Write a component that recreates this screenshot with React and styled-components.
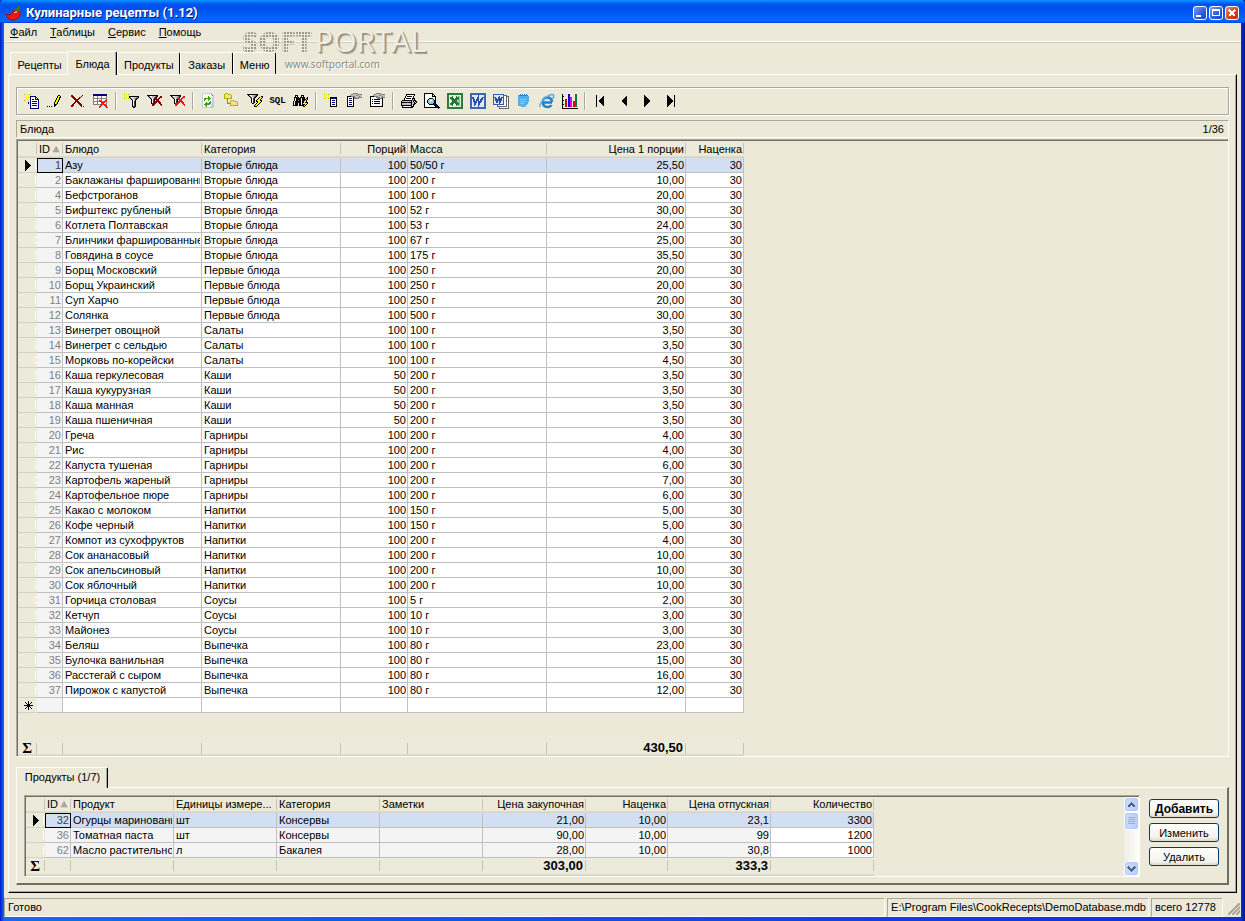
/*
 Main window of the recipe database: menu, tabs, toolbar, dish grid and the
 grid with the products of the selected dish.
*/
import React from 'react';
import styled, { createGlobalStyle, css } from 'styled-components';

const face = '#ece9d8';
const shade = '#aca899';
const dark = '#716f64';
const line = '#c0c0c0';

const GlobalStyle = createGlobalStyle`
  * {
    box-sizing: border-box;
  }
  body {
    margin: 0;
    background: ${face};
    color: #000;
    font: 11px/14px 'Liberation Sans', Arial, sans-serif;
  }
  button {
    margin: 0;
    padding: 0;
    border: 0;
    background: none;
    color: inherit;
    font: inherit;
  }
`;

const Window = styled.div`
  min-height: 100vh;
  display: flex;
  flex-direction: column;
  border: solid #0831d9;
  border-width: 0 4px 4px;
  border-image: linear-gradient(90deg, #0019cf, #166aee 4px, #0831d9 calc(100% - 4px), #00138c) 4;
  background: ${face};
`;

const TitleBar = styled.header`
  display: flex;
  align-items: center;
  height: 23px;
  margin: 0 -4px;
  padding: 3px 6px 0 5px;
  background: linear-gradient(#0997ff, #0053ee 18%, #0050ee 40%, #06f 80%, #0066ff 92%, #003dd7);
  border-radius: 4px 4px 0 0;
`;

const Title = styled.h1`
  flex: 1;
  margin: 0 0 0 4px;
  color: #fff;
  font: bold 13px/16px Roboto, 'Noto Sans', sans-serif;
  text-shadow: 1px 1px #0f1089;
`;

const CaptionButton = styled.button`
  width: 14px;
  height: 14px;
  margin-left: 2px;
  border: 1px solid #fff;
  border-radius: 3px;
  background: ${p => (p.$close ? 'linear-gradient(135deg, #e9896b, #da3f16 60%, #b92c06)' : 'linear-gradient(135deg, #7ba0f0, #2a5be0 60%, #1941c4)')};

  svg {
    display: block;
  }
`;

const MenuBar = styled.nav`
  display: flex;
  gap: 13px;
  height: 20px;
  padding: 0 6px 2px;
  border-bottom: 1px solid #d0cdbf;
  box-shadow: inset 0 -1px #fff;
`;

const MenuItem = styled.button`
  font-size: 11px;
`;

const Body = styled.main`
  flex: 1;
  display: flex;
  flex-direction: column;
  padding: 8px 4px 5px;
`;

const Brand = styled.div`
  position: absolute;
  left: 242px;
  top: 23px;
  pointer-events: none;
`;

const BrandName = styled.div`
  display: flex;
  gap: 3px;
  color: #f0eee4;
  font: 500 30px/36px 'Open Sans', 'Noto Sans', sans-serif;
  text-shadow: 1px 1px 1px #8d8a80, 2px 2px 1px #a5a294;
`;

const BrandDots = styled.span`
  font-size: 28px;
  font-weight: 800;
  color: transparent;
  text-shadow: none;
  background: linear-gradient(90deg, transparent 2px, ${face} 2px) 0 0 / 3px 3px,
    linear-gradient(transparent 2px, ${face} 2px) 0 0 / 3px 3px, #9a978b;
  background-clip: text;
`;

const BrandSite = styled.div`
  margin-left: 43px;
  color: #8f8c82;
  font: 10px/10px 'Noto Sans', sans-serif;
  text-shadow: 1px 1px #fff;
`;

const TabStrip = styled.div`
  display: flex;
  align-items: flex-end;
  height: ${p => (p.$small ? '20px' : '23px')};
  padding-left: ${p => (p.$small ? '0' : '2px')};
`;

const Tab = styled.button`
  height: 22px;
  padding: 2px 5px 0 6px;
  border: solid #fff;
  border-width: 1px 0 0 1px;
  border-right: ${p => (p.$first ? '0' : '1px solid #000')};
  border-radius: 2px 2px 0 0;
  text-align: center;
  min-width: ${p => p.$min || 0}px;
  ${p =>
    p.$active &&
    css`
      height: ${p.$small ? '21px' : '24px'};
      margin-bottom: -1px;
      padding-top: ${p.$small ? '0' : '2px'};
      padding-bottom: ${p.$small ? '2px' : '1px'};
      background: ${face};
      position: relative;
      box-shadow: inset -1px 0 ${shade};
    `};
`;

const Page = styled.section`
  flex: 1;
  display: flex;
  flex-direction: column;
  padding: 12px 7px 7px;
  border: 1px solid;
  border-color: #fff #000 #000 #fff;
  box-shadow: inset -1px -1px ${shade};
`;

const Toolbar = styled.div`
  display: flex;
  flex-wrap: wrap;
  align-items: center;
  min-height: 28px;
  padding: 2px 3px;
  border: 1px solid ${shade};
  box-shadow: 1px 1px #fff, inset 1px 1px #fff;
`;

const ToolButton = styled.button`
  display: grid;
  place-items: center;
  width: 23px;
  height: 22px;
  font: bold 9px/16px 'Liberation Mono', monospace;

  svg {
    display: block;
  }
`;

const Separator = styled.span`
  width: 2px;
  height: 18px;
  margin: 0 3px;
  border-left: 1px solid ${shade};
  border-right: 1px solid #fff;
`;

const Caption = styled.div`
  display: flex;
  justify-content: space-between;
  margin: 5px 0 1px;
  padding: 1px 4px 1px 3px;
  height: 18px;
  border: 1px solid;
  border-color: ${shade} #fff #fff ${shade};
`;

const Frame = styled.div`
  flex: 1;
  display: flex;
  min-width: 0;
  padding: 1px 0 0 1px;
  border: 1px solid;
  border-color: ${shade} #fff #fff ${shade};
  box-shadow: inset 1px 1px ${dark};
`;

const FrameContent = styled.div`
  flex: 1;
  display: flex;
  flex-direction: column;
  justify-content: space-between;
  min-width: 0;
  overflow: hidden;
`;

const Table = styled.table`
  width: ${p => p.$width}px;
  table-layout: fixed;
  border-collapse: separate;
  border-spacing: 0;
`;

const edge = css`
  background: linear-gradient(#c7c5b2, #c7c5b2) right 2px / 1px 11px no-repeat,
    linear-gradient(#e2decd, #d6d2c2) bottom / 100% 2px no-repeat, #ebeadb;
`;

const Head = styled.th`
  height: ${p => p.$height || 17}px;
  padding: 0 2px 2px;
  overflow: hidden;
  font-weight: normal;
  text-align: ${p => (p.$right ? 'right' : 'left')};
  text-overflow: ellipsis;
  white-space: nowrap;
  ${edge};

  svg {
    display: inline-block;
    margin-left: 2px;
  }
`;

const Cell = styled.td`
  height: 15px;
  padding: 0 1px 0 2px;
  border: solid ${line};
  border-width: 0 1px 1px 0;
  background: ${p => (p.$selected ? '#d2dff2' : p.$locked ? '#f4f4f4' : '#fff')};
  color: ${p => (p.$id ? '#808080' : '#000')};
  text-align: ${p => (p.$right ? 'right' : 'left')};
  ${p =>
    p.$id &&
    p.$selected &&
    css`
      color: #404040;
      outline: 1px solid #000;
      outline-offset: -1px;
    `};
`;

const CellText = styled.div`
  overflow: hidden;
  white-space: nowrap;
`;

const Marker = styled.td`
  height: 15px;
  padding: 0 0 0 1px;
  background: linear-gradient(#fff, #fff) right 1px top 3px / 1px 8px no-repeat,
    linear-gradient(#d6d2c2, #d6d2c2) bottom / 100% 1px no-repeat, #ebeadb;

  svg {
    display: block;
    margin: auto;
  }
`;

const Total = styled.td`
  height: ${p => p.$height || 15}px;
  padding: 0 3px 2px 2px;
  font: bold 13px/12px 'Liberation Sans', Arial, sans-serif;
  text-align: right;
  ${edge};
`;

const Sigma = styled(Total)`
  padding: 0 5px 2px 0;
  font: bold 15px/12px 'Liberation Serif', serif;
`;

const Details = styled.section`
  margin-top: 10px;
`;

const DetailsPage = styled.div`
  display: flex;
  gap: 9px;
  padding: 7px 8px 6px 7px;
  border: solid;
  border-width: 1px 2px 2px 1px;
  border-color: #fff ${dark} ${dark} #fff;
`;

const Actions = styled.div`
  display: flex;
  flex-direction: column;
  gap: 5px;
  width: 70px;
  padding-top: 4px;
`;

const Action = styled.button`
  height: 19px;
  border: 1px solid #003c74;
  border-radius: 3px;
  background: linear-gradient(#fff, #f3f2ec 80%, #dcd8cc);
  ${p => p.$primary && 'font-weight: bold; font-size: 12px;'};
`;

const ScrollBar = styled.div`
  display: flex;
  flex-direction: column;
  width: 15px;
  background: linear-gradient(90deg, #eeede5, #fefefb);
`;

const ScrollPart = styled.button`
  display: grid;
  place-items: center;
  height: ${p => p.$height}px;
  margin-top: ${p => (p.$last ? 'auto' : '0')};
  border: 1px solid #fff;
  border-radius: 3px;
  box-shadow: inset 0 0 0 1px #b4c8f6;
  background: linear-gradient(90deg, #cddcfe, #b9cdfb);
`;

const StatusBar = styled.footer`
  display: flex;
  gap: 2px;
  height: 19px;
`;

const StatusPanel = styled.div`
  flex: ${p => (p.$grow ? '1' : 'none')};
  min-width: ${p => p.$min || 0}px;
  padding: 1px 2px 0 3px;
  border: 1px solid;
  border-color: ${shade} #fff #fff ${shade};
  white-space: nowrap;
`;

const Grip = styled.div`
  width: 16px;
  padding: 5px 0 0 3px;
`;

const Svg = ({ size = 16, w, h, children }) => (
  <svg width={w || size} height={h || size} viewBox={`0 0 ${w || size} ${h || size}`} fill="none" shapeRendering="crispEdges" aria-hidden="true">
    {children}
  </svg>
);

const palette = {
  k: '#000', w: '#fff', y: '#ffff00', o: '#b8b000', b: '#000080', g: '#808080', d: '#404040',
  r: '#ff1010', m: '#800000', s: '#c0c0c0', f: '#f6e08c', l: '#b9cfe8', n: '#3fa020', t: '#7fd0d8',
};

// every character is one pixel, runs of the same character become one rect
const Sprite = ({ rows }) => (
  <Svg>
    {rows.map((row, y) =>
      [...row.matchAll(/([a-z])\1*/g)].map(run => (
        <rect key={`${y}-${run.index}`} x={run.index} y={y} width={run[0].length} height="1" fill={palette[run[1]]} />
      )),
    )}
  </Svg>
);

const sprites = {
  add: [
    '...y............', 'o..y..o.........', '.y.y.y..........', '..ywy.bbbbbb....',
    'yyywyybwwwwbb...', '..ywy.bwwwwbwb..', '.y.y.ybwbbwbbbb.', 'o..y..bwwwwwwwb.',
    '...y..bwbbbbbwb.', '....b.bwwwwwwwb.', '....b.bwbbbbbwb.', '......bwwwwwwwb.',
    '......bwbbbbbwb.', '......bwwwwwwwb.', '......bwwwwwwwb.', '......bbbbbbbbb.',
  ],
  edit: [
    '................', '................', '...........kk...', '..........kyyk..',
    '..........kykk..', '.........kyyk...', '.........kyok...', '........kyyk....',
    '........kyok....', '.......kyyk.....', '.......kyok.....', '.......kkk......',
    '.......kk.......', 'k.k.k..k........', '................', '................',
  ],
  remove: [
    '................', '................', '.mm.........m...', '.mmm.......m....',
    '..mmm....mm.....', '...mmm..mm......', '....mmmmm.......', '.....mmm........',
    '.....mmmm.......', '....mm.mmm......', '...mm...mmm.....', '..mm.....mmm....',
    '.mmm......mm....', '.mm........m.m..', '................', '................',
  ],
  table: [
    '................', 'bbbbbbbbbbbbbb..', 'bbbbbbbbbbbbbb..', 'gwwwgwwwgwwwwg..',
    'gwwwgwwwgwwwwg..', 'gggggggggggggg..', 'gwwwgwwwgwwwwr..', 'gwwwgwrrgwwwrr..',
    'gggggggrrggrrg..', 'gwwwgwwwrrrrwg..', 'gwwwgwwwgrrwwg..', 'ggggggggrrrrgg..',
    '.......rr..rrr..', '......rr....rr..', '......r......rr.', '................',
  ],
  filter: [
    '..y.............', 'o.y.o...........', '.yyy............', 'yywyykkkkkkkkkk.',
    '.yyy.kgwwsssggk.', 'o.y.o.kgwssgdk..', '..y....kgwsdk...', '........kwsk....',
    '........kwdk....', '........kwdk....', '........kwdk....', '........kwdk....',
    '........kwdk....', '........kddk....', '.........kk.....', '................',
  ],
  filterOff: [
    '................', '................', 'kkkkkkkkkkk.....', '.kgwwsssgdk..mm.',
    '..kgwssgmk..mmm.', '...kgwsmmm.mm...', '....kwdkmmmm....', '....kwdk.mmm....',
    '....kwdkmmmmm...', '....kwdmmm.mmm..', '....kdmmm...mm..', '.....mmm.....mm.',
    '.....mm.......m.', '................', '................', '................',
  ],
  filterFast: [
    '................', 'kkkkkkkkkkk.....', '.kgwwsssgdk.....', '..kgwssgdk....kk',
    '...kgwsdk...kyyk', '....kwdk...kyyk.', '....kwdk..kyyk..', '....kwdk.kyyykk.',
    '....kwdk.kkyyyk.', '....kwdk..kyyk..', '.....kk..kyyk...', '........kyyk....',
    '.......kyyk.....', '.......kkk......', '................', '................',
  ],
  refresh: [
    '.llllllllll.....', '.lwwwwwwwwgl....', '.lwwwwwwwwwgl...', '.lwwwwwnwwwwl...',
    '.lwwwwwnnwwll...', '.lwnnnnnnnwll...', '.lwnnwwnnwwll...', '.lwnwwwnwwwll...',
    '.lwwwwwwwnwll...', '.lwwwnwwnnwll...', '.lwwnnnnnnwll...', '.lwnnnnnnwlll...',
    '.lwwnnwwwwlll...', '.lwwwnwwwllll...', '.llllllllllll...', '................',
  ],
  tree: [
    '.ooo............', 'offfooo.........', 'offffffo........', 'offffffo........',
    'offffffo........', 'oooooooo........', '...g............', '...g...ooo......',
    '...g..offfooo...', '...g..offffffo..', '...gggoffffffo..', '......offffffo..',
    '......oooooooo..', '................', '................', '................',
  ],
  find: [
    '................', '................', '..kkk...kkk.....', '..kwk...kwk.....',
    '.kkkkk.kkkkk..k.', '.kwkkkkkwkkk.kk.', '.kwkkkkkwkkkkyk.', '.kwkkgkkwkkkyk..',
    'kwkkkkkkwkkyyk..', 'kwkkkkkkwkkykkk.', 'kwkkk.kkwkyyyyk.', 'kwkkk.kkwkkkyk..',
    'kkkkk.kkkkkyk...', '..........kk....', '................', '................',
  ],
  addField: [
    '..y.............', 'o.y.o...........', '.yyy............', 'yywyy...........',
    '.yyy..kkkkkkk...', 'o.y.o.kbbbbbk...', '......kwwwwwk...', '......kwbbbwk...',
    '......kwwwwwk...', '......kwbbbwk...', '......kwwwwwk...', '......kwbbbwk...',
    '......kwwwwwk...', '......kkkkkkk...', '................', '................',
  ],
  field: [
    '......ggggg.....', '....ggsssssgggg.', '...gsssssggssss.', 'kkkkggggssssgss.',
    'kwwwwwkggssgggg.', 'kwbbbwkggggg....', 'kwwwwwk.........', 'kwbbbwk.........',
    'kwwwwwk.........', 'kwbbbwk.........', 'kwwwwwk.........', 'kwbbbwk.........',
    'kwwwwwk.........', 'kkkkkkk.........', '................', '................',
  ],
  fields: [
    '......ggggg.....', '....ggsssssgggg.', '...gsssssggssss.', 'kkkkggggssssgss.',
    'kwwwwwggggsgggg.', 'kwwwwwwgggggk...', 'kwkwkkkkkkwwk...', 'kwwwwwwwwwwwk...',
    'kwkwkkkkkkwwk...', 'kwwwwwwwwwwwk...', 'kwkwkkkkkkwwk...', 'kwwwwwwwwwwwk...',
    'kwwwwwwwwwwwk...', 'kkkkkkkkkkkkk...', '................', '................',
  ],
  print: [
    '................', '.....kkkkkkkkk..', '.....kwwwwwwwk..', '....kwkkkkkwk...',
    '....kwwwwwwwk...', '...kwkkkkkwkkk..', '...kwwwwwwwksk..', '.kkkkkkkkkkskkk.',
    'kssssssssskskskk', 'kkkkkkkkkkkssksk', 'ksssssyyssksskk.', 'kssssssssskskk..',
    'kkkkkkkkkkkwk...', '.kwwwwwwwwkkk...', '.kkkkkkkkkkk....', '................',
  ],
  preview: [
    'kkkkkkkkk.......', 'kwwwwwwwkk......', 'kwwwwwwwkwk.....', 'kwwwwwwwkkkk....',
    'kwwwwwwwwwwk....', 'kwwwwkkkkwwk....', 'kwwwkttwwkwk....', 'kwwkttwwttkk....',
    'kwwkttwtttkk....', 'kwwkttttttkk....', 'kwwwkttttkkk....', 'kwwwwkkkkkbbk...',
    'kwwwwwwwwwkbbk..', 'kwwwwwwwwwwkbbk.', 'kkkkkkkkkkkkkbbk', '..............k.',
  ],
};
sprites.filterClear = sprites.filterOff.map(row => row.replaceAll('m', 'r'));

const Pepper = () => (
  <svg width="17" height="17" viewBox="0 0 17 17" aria-hidden="true">
    <path d="M1 9C4 11 6 10 8 7c2-3 6-3 7 0 1 5-3 8-7 8-4 0-6-2-7-6z" fill="#f01810" stroke="#a80808" />
    <path d="M9 8c1-1 2-1 3-1" stroke="#fff" fill="none" />
    <path d="M10 5c2-2 3 0 5 1M13 5l1-4" stroke="#388018" strokeWidth="2" fill="none" />
  </svg>
);

const Excel = () => (
  <Svg>
    <path d="M1 1h14v14H1z" fill="#e4f0e0" stroke="#2c7a3c" strokeWidth="2" />
    <path d="M11 3h2v10h-2z" fill="#8cc08c" />
    <path d="M4 4l7 8M11 4l-7 8" stroke="#207838" strokeWidth="3" />
  </Svg>
);

const Word = () => (
  <Svg>
    <path d="M1 1h14v14H1z" fill="#dfe9fa" stroke="#3a68b4" strokeWidth="2" />
    <path d="M3 4l2 7 3-6 1 6 4-7" stroke="#2450a8" strokeWidth="2" />
  </Svg>
);

const WordPages = () => (
  <Svg>
    <path d="M6.500 3.500h9v12h-9z" fill="#fff" stroke="#666" />
    <path d="M4.500 2.500h9v11h-9z" fill="#fff" stroke="#666" />
    <path d="M.5 1.500h10v10h-10z" fill="#dfe9fa" stroke="#2e5fae" />
    <path d="M2 4l2 5 2-4 1 4 2-5" stroke="#2450a8" strokeWidth="2" />
  </Svg>
);

const Notepad = () => (
  <Svg>
    <path d="M2 2h9l2 2-1 11-10-2z" fill="#55b0e8" />
    <path d="M3 2h9M4 1v2M6 1v2M8 1v2M10 1v2" stroke="#3a7fb8" />
    <path d="M8 15l6-7-2 7z" fill="#c6e6f8" />
    <path d="M4 6h6M4 8h6M4 10h4" stroke="#80c8f0" />
  </Svg>
);

const Explorer = () => (
  <svg width="16" height="16" viewBox="0 0 16 16" fill="none" aria-hidden="true">
    <path d="M13 9.500H5M13 9C12.500 3 4 3 3.800 9c0 6 7 6 8.700 3" stroke="#2080d8" strokeWidth="2.500" />
    <path d="M1 14C0 10 8 2 13 1.500c3 0 1.500 3 .5 4.500" stroke="#50b0f0" strokeWidth="1.500" />
  </svg>
);

const Chart = () => (
  <Svg>
    <path d="M.5 1v14.500H16M0 3.500h2M0 7.500h2M0 11.500h2M5.500 15v1M10.500 15v1" stroke="#000" />
    <path d="M3 6h2v8H3z" fill="#e00000" />
    <path d="M6 1h2v13H6z" fill="#0000e0" />
    <path d="M8 4h2v10H8z" fill="#e000e0" />
    <path d="M11 8h2v6h-2z" fill="#e00000" />
    <path d="M13 1h2v13h-2z" fill="#008040" />
  </Svg>
);

const Nav = ({ back, stop }) => (
  <Svg>
    <g transform={back ? undefined : 'translate(16 0) scale(-1 1)'}>
      <path d="M11 2v12L5 8z" fill="#000" />
      {stop && <path d="M3.500 2v12" stroke="#000" />}
    </g>
  </Svg>
);

const SortMark = () => (
  <svg width="9" height="8" viewBox="0 0 9 8" aria-hidden="true">
    <path d="M4.500 0L0 8h9z" fill="#aca899" />
    <path d="M4.500 0L9 8H0" fill="none" stroke="#fff" />
  </svg>
);

const Current = () => (
  <Svg w={7} h={11}>
    <path d="M0 0l6 5.500-6 5.500z" fill="#000" />
  </Svg>
);

const NewRow = () => (
  <Svg w={9} h={9}>
    <path d="M4.500 0v9M0 4.500h9M1 1l7 7M8 1L1 8" stroke="#000" />
  </Svg>
);

const toolGroups = [
  [['Добавить', 'add'], ['Изменить', 'edit'], ['Удалить', 'remove'], ['Удалить все', 'table']],
  [['Фильтр', 'filter'], ['Снять фильтр', 'filterOff'], ['Снять все фильтры', 'filterClear']],
  [['Обновить', 'refresh'], ['Дерево', 'tree'], ['Быстрый фильтр', 'filterFast'], ['SQL', 'SQL'], ['Поиск', 'find']],
  [['Новое поле', 'addField'], ['Поле', 'field'], ['Поля', 'fields']],
  [
    ['Печать', 'print'], ['Просмотр', 'preview'], ['Excel', <Excel />], ['Word', <Word />],
    ['Документы Word', <WordPages />], ['Текст', <Notepad />], ['HTML', <Explorer />], ['Диаграмма', <Chart />],
  ],
  [['Первая', <Nav back stop />], ['Предыдущая', <Nav back />], ['Следующая', <Nav />], ['Последняя', <Nav stop />]],
];

const dishColumns = [
  { title: 'ID', width: 26, id: true, right: true },
  { title: 'Блюдо', width: 139 },
  { title: 'Категория', width: 139 },
  { title: 'Порций', width: 67, right: true },
  { title: 'Масса', width: 139 },
  { title: 'Цена 1 порции', width: 139, right: true, total: '430,50' },
  { title: 'Наценка', width: 58, right: true },
];

const dishes = `1|Азу|Вторые блюда|100|50/50 г|25,50
2|Баклажаны фаршированные|Вторые блюда|100|200 г|10,00
4|Бефстроганов|Вторые блюда|100|100 г|20,00
5|Бифштекс рубленый|Вторые блюда|100|52 г|30,00
6|Котлета Полтавская|Вторые блюда|100|53 г|24,00
7|Блинчики фаршированные|Вторые блюда|100|67 г|25,00
8|Говядина в соусе|Вторые блюда|100|175 г|35,50
9|Борщ Московский|Первые блюда|100|250 г|20,00
10|Борщ Украинский|Первые блюда|100|250 г|20,00
11|Суп Харчо|Первые блюда|100|250 г|20,00
12|Солянка|Первые блюда|100|500 г|30,00
13|Винегрет овощной|Салаты|100|100 г|3,50
14|Винегрет с сельдью|Салаты|100|100 г|3,50
15|Морковь по-корейски|Салаты|100|100 г|4,50
16|Каша геркулесовая|Каши|50|200 г|3,50
17|Каша кукурузная|Каши|50|200 г|3,50
18|Каша манная|Каши|50|200 г|3,50
19|Каша пшеничная|Каши|50|200 г|3,50
20|Греча|Гарниры|100|200 г|4,00
21|Рис|Гарниры|100|200 г|4,00
22|Капуста тушеная|Гарниры|100|200 г|6,00
23|Картофель жареный|Гарниры|100|200 г|7,00
24|Картофельное пюре|Гарниры|100|200 г|6,00
25|Какао с молоком|Напитки|100|150 г|5,00
26|Кофе черный|Напитки|100|150 г|5,00
27|Компот из сухофруктов|Напитки|100|200 г|4,00
28|Сок ананасовый|Напитки|100|200 г|10,00
29|Сок апельсиновый|Напитки|100|200 г|10,00
30|Сок яблочный|Напитки|100|200 г|10,00
31|Горчица столовая|Соусы|100|5 г|2,00
32|Кетчуп|Соусы|100|10 г|3,00
33|Майонез|Соусы|100|10 г|3,00
34|Беляш|Выпечка|100|80 г|23,00
35|Булочка ванильная|Выпечка|100|80 г|15,00
36|Расстегай с сыром|Выпечка|100|80 г|16,00
37|Пирожок с капустой|Выпечка|100|80 г|12,00`
  .split('\n')
  .map(row => [...row.split('|'), '30']);

const productColumns = [
  { title: 'ID', width: 26, id: true, right: true },
  { title: 'Продукт', width: 103, locked: true },
  { title: 'Единицы измере...', width: 103, locked: true },
  { title: 'Категория', width: 103, locked: true },
  { title: 'Заметки', width: 103, locked: true },
  { title: 'Цена закупочная', width: 103, locked: true, right: true, total: '303,00' },
  { title: 'Наценка', width: 82, locked: true, right: true },
  { title: 'Цена отпускная', width: 103, locked: true, right: true, total: '333,3' },
  { title: 'Количество', width: 103, right: true },
];

const products = [
  ['32', 'Огурцы маринованные', 'шт', 'Консервы', '', '21,00', '10,00', '23,1', '3300'],
  ['36', 'Томатная паста', 'шт', 'Консервы', '', '90,00', '10,00', '99', '1200'],
  ['62', 'Масло растительное', 'л', 'Бакалея', '', '28,00', '10,00', '30,8', '1000'],
];

const tableWidth = columns => columns.reduce((sum, c) => sum + c.width, 19);

const Cols = ({ columns }) => (
  <colgroup>
    <col width="19" />
    {columns.map(c => (
      <col key={c.title} width={c.width} />
    ))}
  </colgroup>
);

const DataGrid = ({ columns, rows, headHeight, totalHeight, canAppend }) => (
  <FrameContent>
    <Table $width={tableWidth(columns)}>
      <Cols columns={columns} />
      <thead>
        <tr>
          <Head $height={headHeight} />
          {columns.map(c => (
            <Head key={c.title} $height={headHeight} $right={c.right && !c.id}>
              {c.title}
              {c.id && <SortMark />}
            </Head>
          ))}
        </tr>
      </thead>
      <tbody>
        {rows.map((row, i) => (
          <tr key={row[0]}>
            <Marker>{i === 0 && <Current />}</Marker>
            {columns.map((c, n) => (
              <Cell key={c.title} $id={c.id} $right={c.right} $locked={c.locked || c.id} $selected={i === 0}>
                <CellText>{row[n]}</CellText>
              </Cell>
            ))}
          </tr>
        ))}
        {canAppend && (
          <tr>
            <Marker>
              <NewRow />
            </Marker>
            {columns.map(c => (
              <Cell key={c.title} $locked={c.id} />
            ))}
          </tr>
        )}
      </tbody>
    </Table>
    <Table $width={tableWidth(columns)}>
      <Cols columns={columns} />
      <tbody>
        <tr>
          <Sigma $height={totalHeight}>Σ</Sigma>
          {columns.map(c => (
            <Total key={c.title} $height={totalHeight}>
              {c.total}
            </Total>
          ))}
        </tr>
      </tbody>
    </Table>
  </FrameContent>
);

const App = () => (
  <Window>
    <GlobalStyle />
    <TitleBar>
      <Pepper />
      <Title>Кулинарные рецепты (1.12)</Title>
      <CaptionButton aria-label="Свернуть">
        <Svg size={12}>
          <path d="M2 8h5v2H2z" fill="#fff" />
        </Svg>
      </CaptionButton>
      <CaptionButton aria-label="Развернуть">
        <Svg size={12}>
          <path d="M2.500 3.500h7v5h-7zM2 2.500h8" stroke="#fff" />
        </Svg>
      </CaptionButton>
      <CaptionButton $close aria-label="Закрыть">
        <Svg size={12}>
          <path d="M3 3l6 6M9 3L3 9" stroke="#fff" strokeWidth="2" />
        </Svg>
      </CaptionButton>
    </TitleBar>
    <MenuBar>
      {['Файл', 'Таблицы', 'Сервис', 'Помощь'].map(item => (
        <MenuItem key={item}>
          <u>{item[0]}</u>
          {item.slice(1)}
        </MenuItem>
      ))}
    </MenuBar>
    <Body>
      <TabStrip role="tablist">
        <Tab role="tab" $first $min={57}>Рецепты</Tab>
        <Tab role="tab" $min={50} $active aria-selected="true">Блюда</Tab>
        <Tab role="tab" $min={62}>Продукты</Tab>
        <Tab role="tab" $min={53}>Заказы</Tab>
        <Tab role="tab" $min={43}>Меню</Tab>
      </TabStrip>
      <Page>
        <Toolbar role="toolbar">
          {toolGroups.map((group, i) => (
            <React.Fragment key={group[0][0]}>
              {i > 0 && <Separator />}
              {group.map(([label, icon]) => (
                <ToolButton key={label} aria-label={label}>
                  {sprites[icon] ? <Sprite rows={sprites[icon]} /> : icon}
                </ToolButton>
              ))}
            </React.Fragment>
          ))}
        </Toolbar>
        <Caption>
          <span>Блюда</span>
          <span>1/36</span>
        </Caption>
        <Frame>
          <DataGrid columns={dishColumns} rows={dishes} canAppend />
        </Frame>
        <Details>
          <TabStrip $small role="tablist">
            <Tab role="tab" $small $active $min={92} aria-selected="true">Продукты (1/7)</Tab>
          </TabStrip>
          <DetailsPage>
            <Frame>
              <DataGrid columns={productColumns} rows={products} headHeight={16} totalHeight={18} />
              <ScrollBar>
                <ScrollPart $height={15} aria-label="Вверх">
                  <Svg w={9} h={6}>
                    <path d="M1 5l3.500-3.500L8 5" stroke="#4d6185" strokeWidth="2" />
                  </Svg>
                </ScrollPart>
                <ScrollPart $height={18} aria-label="Ползунок">
                  <Svg w={7} h={8}>
                    <path d="M0 .5h7M0 2.500h7M0 4.500h7M0 6.500h7" stroke="#8cb0f8" />
                  </Svg>
                </ScrollPart>
                <ScrollPart $height={15} $last aria-label="Вниз">
                  <Svg w={9} h={6}>
                    <path d="M1 1l3.500 3.500L8 1" stroke="#4d6185" strokeWidth="2" />
                  </Svg>
                </ScrollPart>
              </ScrollBar>
            </Frame>
            <Actions>
              <Action $primary>Добавить</Action>
              <Action>Изменить</Action>
              <Action>Удалить</Action>
            </Actions>
          </DetailsPage>
        </Details>
      </Page>
    </Body>
    <StatusBar>
      <StatusPanel $grow>Готово</StatusPanel>
      <StatusPanel $min={250}>E:\Program Files\CookRecepts\DemoDatabase.mdb</StatusPanel>
      <StatusPanel $min={72}>всего 12778</StatusPanel>
      <Grip>
        <Svg w={12} h={12}>
          <path d="M0 12L12 0M4 12l8-8M8 12l4-4" stroke={shade} strokeWidth="2" />
        </Svg>
      </Grip>
    </StatusBar>
    <Brand>
      <BrandName>
        <BrandDots>SOFT</BrandDots>PORTAL
      </BrandName>
      <BrandSite>www.softportal.com</BrandSite>
    </Brand>
  </Window>
);

export default App;
